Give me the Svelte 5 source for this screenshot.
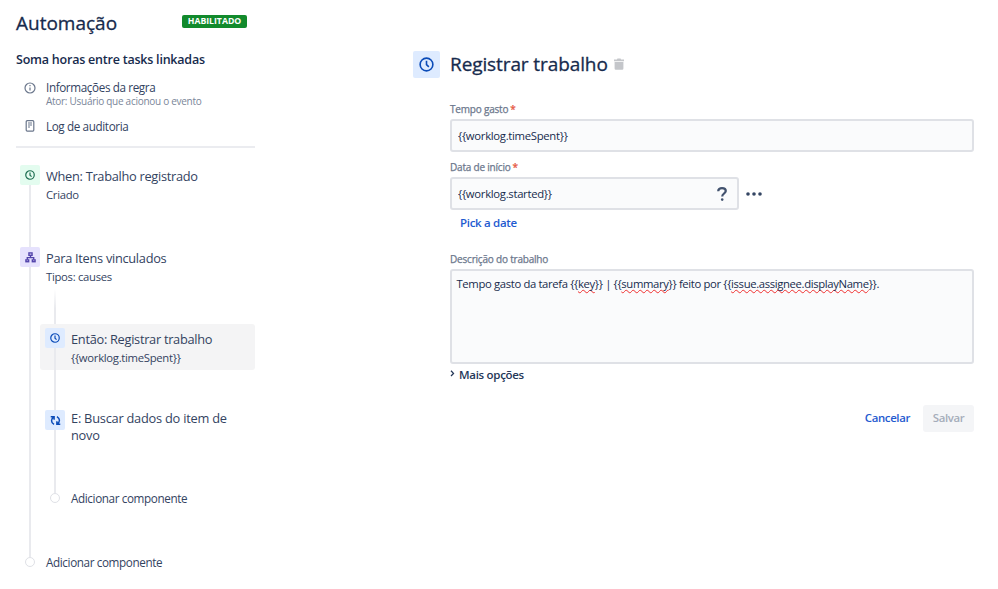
<script lang="ts">
	let timeSpent = $state('{{worklog.timeSpent}}');
	let started = $state('{{worklog.started}}');

	const description = [
		{ text: 'Tempo gasto da tarefa {{', marked: false },
		{ text: 'key', marked: true },
		{ text: '}} | {{', marked: false },
		{ text: 'summary', marked: true },
		{ text: '}} feito por {{', marked: false },
		{ text: 'issue.assignee.displayName', marked: true },
		{ text: '}}.', marked: false }
	];
</script>

{#snippet clock()}
	<svg class="clock" viewBox="0 0 16 16">
		<circle cx="8" cy="8" r="6.8" />
		<path d="M8 4v4.2l2.5 2.3" />
	</svg>
{/snippet}

<div class="page">
	<aside class="sidebar">
		<header class="rule-header">
			<h1>Automação</h1>
			<span class="lozenge"><b>HABILITADO</b></span>
		</header>
		<h2>Soma horas entre tasks linkadas</h2>

		<nav class="rule-nav">
			<div class="nav-item info">
				<svg class="nav-icon" viewBox="0 0 12 12">
					<circle cx="6" cy="6" r="5" />
					<path d="M6 5.4v3.2M6 3.1v1.2" />
				</svg>
				<div>
					<div class="nav-title">Informações da regra</div>
					<div class="nav-sub">Ator: Usuário que acionou o evento</div>
				</div>
			</div>
			<div class="nav-item audit">
				<svg class="nav-icon" viewBox="0 0 12 12">
					<rect x="2.2" y="0.7" width="7.6" height="10.4" rx="1" />
					<path d="M4 3h4M4 5h4M4 7h2" />
				</svg>
				<div class="nav-title">Log de auditoria</div>
			</div>
		</nav>

		<div class="tree">
			<div class="step trigger">
				<div class="rail">
					<span class="icon green">{@render clock()}</span>
					<span class="line"></span>
				</div>
				<div class="body">
					<div class="title">When: Trabalho registrado</div>
					<div class="sub">Criado</div>
				</div>
			</div>

			<div class="step branch">
				<div class="rail">
					<span class="icon purple">
						<svg class="fork" viewBox="0 0 12 12">
							<rect x="4.3" y="1" width="3.4" height="2.6" />
							<path d="M6 3.6v2.6M2.5 8.3V6.2h7v2.1" />
							<rect x="1" y="8.6" width="3" height="2" />
							<rect x="8" y="8.6" width="3" height="2" />
						</svg>
					</span>
					<span class="line"></span>
				</div>
				<div class="body">
					<div class="title">Para Itens vinculados</div>
					<div class="sub">Tipos: causes</div>

					<div class="children">
						<div class="connector lead"></div>
						<div class="step selected">
							<div class="rail">
								<span class="icon blue">{@render clock()}</span>
								<span class="line"></span>
							</div>
							<div class="body">
								<div class="title">Então: Registrar trabalho</div>
								<div class="sub">{timeSpent}</div>
							</div>
						</div>
						<div class="connector between"></div>
						<div class="step refetch">
							<div class="rail">
								<span class="icon blue">
									<svg class="refresh" viewBox="0 0 12 12">
										<path d="M.8 1.9h3.7v3.3M4.3 2.3C.8 4.3.8 8.2 4.4 10.3" />
										<path d="M11.2 10.1H7.5V6.8M7.7 9.7C11.2 7.7 11.2 3.8 7.6 1.7" />
									</svg>
								</span>
								<span class="line"></span>
							</div>
							<div class="body">
								<div class="title">E: Buscar dados do item de novo</div>
							</div>
						</div>
						<div class="add">
							<span class="dot"></span>
							<span class="add-label">Adicionar componente</span>
						</div>
					</div>
				</div>
			</div>

			<div class="add">
				<span class="dot"></span>
				<span class="add-label">Adicionar componente</span>
			</div>
		</div>
	</aside>

	<main class="panel">
		<header class="panel-header">
			<span class="icon blue big">{@render clock()}</span>
			<h1>Registrar trabalho</h1>
			<svg class="trash" viewBox="0 0 10 12">
				<path d="M0 1.6h3L3.4.5h3.2L7 1.6h3v1.6H0zM.6 4h8.8v6.6a1.2 1.2 0 0 1-1.2 1.2H1.8A1.2 1.2 0 0 1 .6 10.6z" />
			</svg>
		</header>

		<form class="form">
			<div class="label">Tempo gasto<i>*</i></div>
			<div class="field">
				<input bind:value={timeSpent} />
			</div>

			<div class="label second">Data de início<i>*</i></div>
			<div class="date-row">
				<div class="field date">
					<input bind:value={started} />
					<svg class="help" viewBox="0 0 10 14">
						<path d="M1.2 4.2C1.2 2.2 2.8 1.2 5 1.2s3.8 1 3.8 2.9C8.8 6.4 5.2 6.3 5.2 9.4" />
						<circle cx="5.2" cy="12.6" r="1.3" />
					</svg>
				</div>
				<svg class="more" viewBox="0 0 16 4">
					<circle cx="2" cy="2" r="1.8" />
					<circle cx="8" cy="2" r="1.8" />
					<circle cx="14" cy="2" r="1.8" />
				</svg>
			</div>
			<div class="pick">Pick a date</div>

			<div class="label third">Descrição do trabalho</div>
			<div class="textarea">
				{#each description as part}<span class:marked={part.marked}>{part.text}</span>{/each}
			</div>

			<div class="options">
				<svg class="chevron" viewBox="0 0 5 7"><path d="M1 .8l2.5 2.6L1 6" /></svg>
				<span>Mais opções</span>
			</div>

			<div class="actions">
				<button type="button" class="cancel">Cancelar</button>
				<button type="button" class="save" disabled>Salvar</button>
			</div>
		</form>
	</main>
</div>

<style>
	:global(body) {
		background: #fff;
	}

	.page {
		display: flex;
		height: 589px;
		overflow: hidden;
		font-family: 'Open Sans', 'Noto Sans', sans-serif;
		font-size: 12px;
		color: #33435f;
	}

	h1,
	h2 {
		margin: 0;
		color: #172b4d;
		white-space: nowrap;
	}

	h1 {
		font-size: 19px;
		line-height: 26px;
		font-weight: 500;
		-webkit-text-stroke: 0.3px;
	}

	svg {
		display: block;
		fill: none;
		stroke: currentColor;
		flex: none;
	}

	.sidebar {
		width: 239px;
		flex: none;
		padding-left: 16px;
	}

	.rule-header {
		display: flex;
		align-items: center;
		justify-content: space-between;
		padding: 10px 8px 0 0;
		height: 26px;
	}

	.lozenge {
		display: flex;
		align-items: center;
		justify-content: center;
		width: 65px;
		height: 13px;
		margin-top: -3px;
		border-radius: 2px;
		background: #128a2c;
		color: #fff;
		font-size: 8.7px;
		line-height: 13px;
	}

	h2 {
		margin-top: 15px;
		font-size: 12.5px;
		line-height: 18px;
		font-weight: 600;
		letter-spacing: -0.22px;
	}

	.rule-nav {
		height: 77px;
		border-bottom: 2px solid #ebecf0;
	}

	.nav-item {
		display: flex;
		gap: 10px;
		padding-left: 8px;
		white-space: nowrap;
	}

	.info,
	.audit {
		padding-top: 10px;
	}

	.nav-icon {
		width: 12px;
		height: 12px;
		margin-top: 3px;
		color: #6b778c;
		stroke-width: 1.2;
	}

	.audit .nav-icon {
		margin-top: 2px;
	}

	.nav-title {
		font-size: 11.7px;
		line-height: 16px;
		letter-spacing: -0.38px;
	}

	.nav-sub {
		font-size: 10px;
		line-height: 13px;
		letter-spacing: -0.28px;
		color: #7a8699;
	}

	.tree {
		padding: 17px 0 0 4px;
	}

	.step {
		display: flex;
	}

	.rail {
		display: flex;
		flex-direction: column;
		align-items: center;
		width: 20px;
		flex: none;
	}

	.line {
		flex: 1;
		width: 2px;
		background: #e9eaee;
	}

	.icon {
		display: flex;
		align-items: center;
		justify-content: center;
		width: 20px;
		height: 20px;
		flex: none;
		border-radius: 2px;
	}

	.green {
		background: #e3fcef;
		color: #1b6e50;
	}

	.purple {
		background: #e6e2fd;
		color: #5243aa;
	}

	.blue {
		background: #deebff;
		color: #0a4bb8;
	}

	.clock {
		width: 10px;
		height: 10px;
		stroke-width: 1.9;
	}

	.fork {
		width: 11px;
		height: 11px;
		stroke-width: 1.5;
	}

	.refresh {
		width: 11px;
		height: 11px;
		stroke-width: 1.6;
	}

	.body {
		flex: 1;
		min-width: 0;
		padding-left: 6px;
	}

	.title {
		font-size: 12.8px;
		line-height: 17px;
		letter-spacing: -0.29px;
		padding-top: 3px;
	}

	.sub {
		font-size: 11.3px;
		line-height: 16px;
		letter-spacing: -0.3px;
		padding-top: 2px;
	}

	.trigger {
		height: 82px;
	}

	.branch {
		height: 310px;
	}

	.children {
		margin-left: -6px;
	}

	.connector {
		width: 2px;
		margin-left: 14px;
		background: #e9eaee;
	}

	.lead {
		height: 39px;
		background: linear-gradient(#fff 10%, #e9eaee 60%);
	}

	.between {
		height: 40px;
	}

	.selected {
		height: 42px;
		padding: 4px 0 0 5px;
		border-radius: 3px;
		background: #f4f4f5;
	}

	.refetch {
		height: 83px;
		padding-left: 5px;
	}

	.refetch .title {
		padding-top: 0;
		letter-spacing: -0.23px;
	}

	.add {
		display: flex;
		align-items: center;
		gap: 11px;
		height: 10px;
		padding-left: 5px;
		font-size: 11.7px;
		letter-spacing: -0.38px;
		white-space: nowrap;
	}

	.children .add {
		padding-left: 10px;
	}

	.dot {
		box-sizing: border-box;
		width: 10px;
		height: 10px;
		border: 1px solid #dfe1e6;
		border-radius: 50%;
	}

	.add-label {
		line-height: 16px;
	}

	.panel {
		width: 561px;
		margin-left: 158px;
		padding-top: 51px;
	}

	.panel-header {
		display: flex;
		align-items: center;
		height: 27px;
	}

	.panel-header h1 {
		margin: -2px 0 0 10px;
		letter-spacing: -0.1px;
	}

	.big {
		width: 27px;
		height: 27px;
	}

	.big .clock,
	.big :global(.clock) {
		width: 15px;
		height: 15px;
		stroke-width: 1.7;
	}

	.trash {
		width: 10px;
		height: 12px;
		margin: -1px 0 0 6px;
		fill: #c4c6ca;
		stroke: none;
	}

	.form {
		padding: 24px 0 0 37px;
	}

	.label {
		font-size: 10px;
		line-height: 14px;
		letter-spacing: -0.2px;
		-webkit-text-stroke: 0.25px;
		color: #6b778c;
	}

	.label i {
		font-style: normal;
		color: #e5533b;
		padding-left: 2px;
	}

	.field {
		box-sizing: border-box;
		display: flex;
		align-items: center;
		height: 33px;
		margin-top: 3px;
		padding: 0 10px 0 6px;
		border: 2px solid #dfe1e6;
		border-radius: 3px;
		background: #fafbfc;
	}

	input {
		flex: 1;
		min-width: 0;
		padding: 0;
		border: none;
		outline: none;
		background: transparent;
		font: inherit;
		font-size: 11.3px;
		letter-spacing: -0.3px;
		color: #172b4d;
	}

	.second {
		margin-top: 8px;
	}

	.date-row {
		display: flex;
		align-items: center;
		gap: 7px;
	}

	.date {
		width: 289px;
	}

	.help {
		width: 10px;
		height: 14px;
		color: #42526e;
		stroke-width: 2.2;
	}

	.help circle {
		fill: currentColor;
		stroke: none;
	}

	.more {
		width: 16px;
		height: 4px;
		margin-top: 4px;
		fill: #344563;
		stroke: none;
	}

	.pick {
		margin: 4px 0 0 10px;
		font-size: 11.5px;
		line-height: 18px;
		letter-spacing: -0.3px;
		font-weight: 600;
		color: #1f5bd0;
	}

	.third {
		margin-top: 20px;
	}

	.textarea {
		box-sizing: border-box;
		height: 95px;
		margin-top: 3px;
		padding: 5px 5px 5px 4.5px;
		border: 2px solid #dfe1e6;
		border-radius: 3px;
		background: #fafbfc;
		font-size: 11.3px;
		line-height: 16px;
		letter-spacing: -0.36px;
		color: #172b4d;
		white-space: nowrap;
	}

	.marked {
		text-decoration: underline wavy #f03030 0.5px;
		text-decoration-skip-ink: none;
		text-underline-offset: 1px;
	}

	.options {
		display: flex;
		align-items: center;
		gap: 4px;
		margin-top: 3px;
		font-size: 11.5px;
		line-height: 16px;
		letter-spacing: -0.3px;
		font-weight: 600;
		color: #253858;
	}

	.chevron {
		width: 5px;
		height: 7px;
		margin-top: -3px;
		stroke-width: 1.3;
	}

	.actions {
		display: flex;
		justify-content: flex-end;
		gap: 13px;
		margin-top: 22px;
	}

	button {
		height: 27px;
		padding: 0 0 2px;
		border: none;
		border-radius: 3px;
		background: transparent;
		font: inherit;
		font-size: 11.4px;
		font-weight: 600;
		letter-spacing: -0.35px;
		color: #1f5bd0;
	}

	.save {
		width: 51px;
		background: #f4f5f7;
		color: #a5adba;
	}
</style>
